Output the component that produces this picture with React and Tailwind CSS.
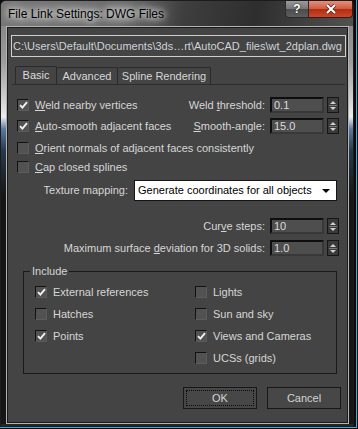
import React from "react";

function Check({ checked }) {
  return (
    <span className="flex h-[12px] w-[12px] shrink-0 items-center justify-center border border-[#121212] border-b-[#5c5c5c] border-r-[#5c5c5c] bg-[#525252]">
      {checked && (
        <svg width="9" height="8" viewBox="0 0 9 8">
          <path d="M1 4.2 3.4 6.6 8 1.2" fill="none" stroke="#f2f2f2" strokeWidth="1.9" />
        </svg>
      )}
    </span>
  );
}

function CheckRow({ checked, children, className = "" }) {
  return (
    <div className={`flex h-[14px] items-center gap-[6px] ${className}`}>
      <Check checked={checked} />
      <span className="whitespace-nowrap">{children}</span>
    </div>
  );
}

function Spinner() {
  return (
    <div className="flex h-[16px] w-[12px] flex-col items-center justify-center gap-[1px] border border-[#161616] bg-[#3a3a3a]">
      <svg width="6" height="3" viewBox="0 0 6 3">
        <path d="M0 3h6L3 0z" fill="#d0d0d0" />
      </svg>
      <span className="h-px w-[8px] bg-[#7a7a7a]" />
      <svg width="6" height="3" viewBox="0 0 6 3">
        <path d="M0 0h6L3 3z" fill="#d0d0d0" />
      </svg>
    </div>
  );
}

function NumField({ value }) {
  return (
    <div className="flex h-[16px] w-[54px] shrink-0 items-center border-2 border-[#0e0e0e] border-b-[#383838] border-r-[#383838] bg-[#4e4e4e] pl-[2px] text-[#dcdcdc]">
      {value}
    </div>
  );
}

function SpinRow({ label, value, className = "" }) {
  return (
    <div className={`flex h-[16px] items-center justify-end ${className}`}>
      <span className="mr-[5px] whitespace-nowrap">{label}</span>
      <NumField value={value} />
      <span className="ml-[3px]">
        <Spinner />
      </span>
    </div>
  );
}

function Button({ children, focused }) {
  return (
    <button className="flex h-[22px] w-[74px] items-center justify-center border border-[#181818] bg-[#474747] text-[#d4d4d4]">
      <span
        className={
          focused
            ? "flex h-[16px] w-[68px] items-center justify-center border border-dotted border-[#0a0a0a]"
            : ""
        }
      >
        {children}
      </span>
    </button>
  );
}

export default function App() {
  return (
    <div className="h-[429px] w-[358px] overflow-hidden bg-[#0b0b0b] font-['Liberation_Sans',Arial,sans-serif] text-[11px] text-[#d6d6d6]">
      <div className="h-[428px] w-[357px] border-b border-r border-[#3ab0dc]">
        <div className="flex h-[427px] w-[354px] flex-col rounded-t-[6px] border border-[#1c1c1c] bg-[linear-gradient(180deg,#7c7c7c_0px,#9c9c9c_60px,#d4d4d4_100px,#ececec_116px,#5a7aa2_128px,#27384c_150px,#161616_195px,#161616_100%)]">
          {/* title bar */}
          <div className="flex h-[25px] shrink-0 rounded-t-[5px] bg-[linear-gradient(100deg,#767676_0%,#6a6a6a_35%,#3e3e3e_52%,#2e2e2e_72%,#525252_100%)]">
            <div className="flex items-center pl-[7px]">
              <span className="whitespace-nowrap text-[12px] text-black [text-shadow:0_0_6px_#fff,0_0_10px_rgba(255,255,255,0.9),0_0_14px_rgba(255,255,255,0.7)]">
                File Link Settings: DWG Files
              </span>
            </div>
            <div className="ml-auto flex items-start">
              <div className="flex h-[17px] w-[24px] items-center justify-center rounded-bl-[4px] border border-t-0 border-[#2a2a2a] bg-[linear-gradient(180deg,#9a9a9a_0%,#767676_50%,#4c4c4c_51%,#5e5e5e_100%)] text-[12px] font-bold text-white [text-shadow:0_0_2px_#000]">
                ?
              </div>
              <div className="flex h-[17px] w-[44px] items-center justify-center rounded-br-[4px] border border-l-0 border-t-0 border-[#3a1a12] bg-[linear-gradient(180deg,#e2907e_0%,#cf5a40_50%,#b32c12_51%,#c8482a_100%)]">
                <svg width="12" height="10" viewBox="0 0 12 10">
                  <path d="M2 1l8 8M10 1l-8 8" stroke="#5a1a10" strokeWidth="3.6" />
                  <path d="M2 1l8 8M10 1l-8 8" stroke="#ffffff" strokeWidth="2.2" />
                </svg>
              </div>
            </div>
          </div>

          {/* body */}
          <div className="flex h-[398px] shrink-0">
            <div className="w-[5px] shrink-0" />
            <div className="h-[398px] w-[343px] shrink-0 border border-[#b4b4b4]">
              <div className="flex h-[396px] w-[341px] flex-col overflow-hidden border border-[#1a1a1a] bg-[#444444]">
                {/* path */}
                <div className="ml-[3px] mt-[7px] flex h-[22px] w-[335px] shrink-0 items-center overflow-hidden border border-[#cfcfcf] pl-[1px] text-[11px] text-[#cdd3d9]">
                  <span className="whitespace-nowrap">
                    C:\Users\Default\Documents\3ds…rt\AutoCAD_files\wt_2dplan.dwg
                  </span>
                </div>

                {/* tabs */}
                <div className="ml-[4px] mt-[10px] flex h-[18px] w-[333px] shrink-0 items-end border-b border-[#2e2e2e] pl-[3px]">
                  <div className="flex h-[18px] w-[42px] items-center justify-center rounded-t-[2px] border border-b-0 border-[#2a2a2a] text-[#dcdcdc]">
                    Basic
                  </div>
                  <div className="flex h-[17px] w-[61px] items-center justify-center rounded-t-[2px] border border-b-0 border-l-0 border-[#2a2a2a]">
                    Advanced
                  </div>
                  <div className="flex h-[17px] w-[93px] items-center justify-center rounded-t-[2px] border border-b-0 border-l-0 border-[#2a2a2a]">
                    Spline Rendering
                  </div>
                </div>

                {/* panel */}
                <div className="ml-[9px] flex w-[322px] flex-col">
                  <div className="mt-[12px] flex h-[16px] items-center justify-between">
                    <CheckRow checked>
                      <u>W</u>eld nearby vertices
                    </CheckRow>
                    <SpinRow
                      label={
                        <>
                          Weld <u>t</u>hreshold:
                        </>
                      }
                      value="0.1"
                    />
                  </div>
                  <div className="mt-[5px] flex h-[16px] items-center justify-between">
                    <CheckRow checked>
                      <u>A</u>uto-smooth adjacent faces
                    </CheckRow>
                    <SpinRow
                      label={
                        <>
                          <u>S</u>mooth-angle:
                        </>
                      }
                      value="15.0"
                    />
                  </div>
                  <CheckRow className="mt-[7px]">
                    <u>O</u>rient normals of adjacent faces consistently
                  </CheckRow>
                  <CheckRow className="mt-[5px]">
                    <u>C</u>ap closed splines
                  </CheckRow>

                  <div className="mt-[6px] flex h-[21px] items-center">
                    <span className="w-[111px] shrink-0 whitespace-nowrap text-right">Texture mapping:</span>
                    <div className="ml-[6px] flex h-[21px] w-[203px] shrink-0 items-center justify-between border border-[#141414] bg-white pl-[3px] pr-[6px] text-black">
                      <span className="whitespace-nowrap">Generate coordinates for all objects</span>
                      <svg width="8" height="4" viewBox="0 0 8 4">
                        <path d="M0 0h8L4 4z" fill="#000" />
                      </svg>
                    </div>
                  </div>

                  <SpinRow
                    className="mt-[17px]"
                    label={
                      <>
                        Cur<u>v</u>e steps:
                      </>
                    }
                    value="10"
                  />
                  <SpinRow
                    className="mt-[6px]"
                    label={
                      <>
                        Maximum surface <u>d</u>eviation for 3D solids:
                      </>
                    }
                    value="1.0"
                  />

                  <fieldset className="ml-[6px] mt-[8px] h-[110px] w-[314px] border border-[#191919] p-0">
                    <legend className="ml-[6px] px-[2px] leading-[14px]">Include</legend>
                    <div className="mt-[7px] flex pl-[11px]">
                      <div className="flex w-[160px] flex-col gap-[8px]">
                        <CheckRow checked>External references</CheckRow>
                        <CheckRow>Hatches</CheckRow>
                        <CheckRow checked>Points</CheckRow>
                      </div>
                      <div className="flex flex-col gap-[8px]">
                        <CheckRow>Lights</CheckRow>
                        <CheckRow>Sun and sky</CheckRow>
                        <CheckRow checked>Views and Cameras</CheckRow>
                        <CheckRow>UCSs (grids)</CheckRow>
                      </div>
                    </div>
                  </fieldset>

                  <div className="mt-[13px] flex w-[324px] justify-end gap-[10px]">
                    <Button focused>OK</Button>
                    <Button>Cancel</Button>
                  </div>
                </div>
              </div>
            </div>
            <div className="w-[4px] shrink-0" />
          </div>
          <div className="h-[2px] shrink-0 bg-[#262626]" />
        </div>
      </div>
    </div>
  );
}
